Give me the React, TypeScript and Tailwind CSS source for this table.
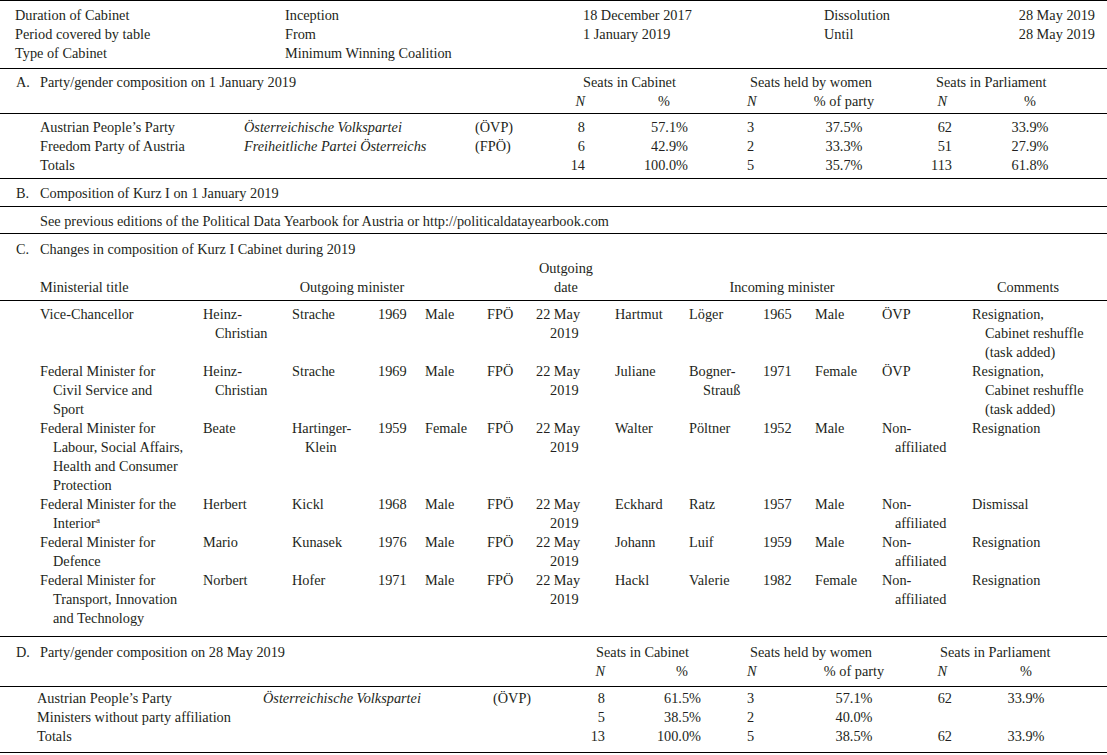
import React from "react";

type Lines = React.ReactNode[];

function Cell({ w, lines, hang = "pl-[13px]" }: { w: string; lines: Lines; hang?: string }) {
  return (
    <div className={`${w} shrink-0 whitespace-nowrap`}>
      {lines.map((l, i) => (
        <div key={i} className={`h-[19px] ${i ? hang : ""}`}>
          {l}
        </div>
      ))}
    </div>
  );
}

type CRow = {
  title: Lines;
  first: Lines;
  sur: Lines;
  year: string;
  gender: string;
  party: string;
  inFirst: Lines;
  inSur: Lines;
  inYear: string;
  inGender: string;
  inParty: Lines;
  comments: Lines;
};

const date: Lines = ["22 May", "2019"];

const cRows: CRow[] = [
  {
    title: ["Vice-Chancellor"],
    first: ["Heinz-", "Christian"],
    sur: ["Strache"],
    year: "1969",
    gender: "Male",
    party: "FPÖ",
    inFirst: ["Hartmut"],
    inSur: ["Löger"],
    inYear: "1965",
    inGender: "Male",
    inParty: ["ÖVP"],
    comments: ["Resignation,", "Cabinet reshuffle", "(task added)"],
  },
  {
    title: ["Federal Minister for", "Civil Service and", "Sport"],
    first: ["Heinz-", "Christian"],
    sur: ["Strache"],
    year: "1969",
    gender: "Male",
    party: "FPÖ",
    inFirst: ["Juliane"],
    inSur: ["Bogner-", "Strauß"],
    inYear: "1971",
    inGender: "Female",
    inParty: ["ÖVP"],
    comments: ["Resignation,", "Cabinet reshuffle", "(task added)"],
  },
  {
    title: ["Federal Minister for", "Labour, Social Affairs,", "Health and Consumer", "Protection"],
    first: ["Beate"],
    sur: ["Hartinger-", "Klein"],
    year: "1959",
    gender: "Female",
    party: "FPÖ",
    inFirst: ["Walter"],
    inSur: ["Pöltner"],
    inYear: "1952",
    inGender: "Male",
    inParty: ["Non-", "affiliated"],
    comments: ["Resignation"],
  },
  {
    title: [
      "Federal Minister for the",
      <span key="i">
        Interior<span className="relative -top-[5px] text-[9px] leading-[0]">a</span>
      </span>,
    ],
    first: ["Herbert"],
    sur: ["Kickl"],
    year: "1968",
    gender: "Male",
    party: "FPÖ",
    inFirst: ["Eckhard"],
    inSur: ["Ratz"],
    inYear: "1957",
    inGender: "Male",
    inParty: ["Non-", "affiliated"],
    comments: ["Dismissal"],
  },
  {
    title: ["Federal Minister for", "Defence"],
    first: ["Mario"],
    sur: ["Kunasek"],
    year: "1976",
    gender: "Male",
    party: "FPÖ",
    inFirst: ["Johann"],
    inSur: ["Luif"],
    inYear: "1959",
    inGender: "Male",
    inParty: ["Non-", "affiliated"],
    comments: ["Resignation"],
  },
  {
    title: ["Federal Minister for", "Transport, Innovation", "and Technology"],
    first: ["Norbert"],
    sur: ["Hofer"],
    year: "1971",
    gender: "Male",
    party: "FPÖ",
    inFirst: ["Hackl"],
    inSur: ["Valerie"],
    inYear: "1982",
    inGender: "Female",
    inParty: ["Non-", "affiliated"],
    comments: ["Resignation"],
  },
];

type PRow = { name: string; it?: string; ab?: string; n1: string; p1: string; n2: string; p2: string; n3?: string; p3?: string };

const aRows: PRow[] = [
  { name: "Austrian People’s Party", it: "Österreichische Volkspartei", ab: "(ÖVP)", n1: "8", p1: "57.1%", n2: "3", p2: "37.5%", n3: "62", p3: "33.9%" },
  { name: "Freedom Party of Austria", it: "Freiheitliche Partei Österreichs", ab: "(FPÖ)", n1: "6", p1: "42.9%", n2: "2", p2: "33.3%", n3: "51", p3: "27.9%" },
  { name: "Totals", n1: "14", p1: "100.0%", n2: "5", p2: "35.7%", n3: "113", p3: "61.8%" },
];

const dRows: PRow[] = [
  { name: "Austrian People’s Party", it: "Österreichische Volkspartei", ab: "(ÖVP)", n1: "8", p1: "61.5%", n2: "3", p2: "57.1%", n3: "62", p3: "33.9%" },
  { name: "Ministers without party affiliation", n1: "5", p1: "38.5%", n2: "2", p2: "40.0%" },
  { name: "Totals", n1: "13", p1: "100.0%", n2: "5", p2: "38.5%", n3: "62", p3: "33.9%" },
];

export default function App() {
  return (
    <div className="w-[1107px] h-[755px] bg-white font-['Liberation_Serif','Times_New_Roman',serif] text-[14.3px] leading-[19px] text-[#231f20]">
      {/* Block 0 */}
      <div className="border-t border-black pt-[5px] pb-[5px]">
        {[
          ["Duration of Cabinet", "Inception", "18 December 2017", "Dissolution", "28 May 2019"],
          ["Period covered by table", "From", "1 January 2019", "Until", "28 May 2019"],
          ["Type of Cabinet", "Minimum Winning Coalition", "", "", ""],
        ].map((r, i) => (
          <div key={i} className="flex pl-[15px] pr-[12px] h-[19px] whitespace-nowrap">
            <div className="w-[270px] shrink-0">{r[0]}</div>
            <div className="w-[298px] shrink-0">{r[1]}</div>
            <div className="w-[241px] shrink-0">{r[2]}</div>
            <div className="w-[130px] shrink-0">{r[3]}</div>
            <div className="flex-1 text-right">{r[4]}</div>
          </div>
        ))}
      </div>

      {/* A header */}
      <div className="border-t border-black pt-[4px] pb-[2px]">
        <div className="flex pl-[16px] h-[19px] whitespace-nowrap">
          <div className="w-[24px] shrink-0">A.</div>
          <div className="w-[543px] shrink-0">Party/gender composition on 1 January 2019</div>
          <div className="w-[167px] shrink-0">Seats in Cabinet</div>
          <div className="w-[186px] shrink-0">Seats held by women</div>
          <div className="flex-1">Seats in Parliament</div>
        </div>
        <div className="flex pl-[535px] h-[19px] whitespace-nowrap">
          <div className="w-[50px] shrink-0 text-right italic">N</div>
          <div className="w-[103px] shrink-0 text-right pr-[18px]">%</div>
          <div className="ml-[59px] w-[50px] shrink-0 italic">N</div>
          <div className="w-[94px] shrink-0 text-center">% of party</div>
          <div className="w-[61px] shrink-0 text-right pr-[5px] italic">N</div>
          <div className="w-[156px] shrink-0 text-center">%</div>
        </div>
      </div>

      {/* A body */}
      <div className="border-t border-black pt-[4px] pb-[3px]">
        {aRows.map((r, i) => (
          <div key={i} className="flex pl-[40px] h-[19px] whitespace-nowrap">
            <div className="w-[204px] shrink-0">{r.name}</div>
            <div className="w-[231px] shrink-0 italic">{r.it}</div>
            <div className="w-[60px] shrink-0">{r.ab}</div>
            <div className="w-[50px] shrink-0 text-right">{r.n1}</div>
            <div className="w-[103px] shrink-0 text-right">{r.p1}</div>
            <div className="ml-[59px] w-[50px] shrink-0">{r.n2}</div>
            <div className="w-[94px] shrink-0 text-center">{r.p2}</div>
            <div className="w-[61px] shrink-0 text-right">{r.n3}</div>
            <div className="w-[156px] shrink-0 text-center">{r.p3}</div>
          </div>
        ))}
      </div>

      {/* B header */}
      <div className="border-t border-black pt-[5px] pb-[3px]">
        <div className="flex pl-[16px] h-[19px] whitespace-nowrap">
          <div className="w-[24px] shrink-0">B.</div>
          <div>Composition of Kurz I on 1 January 2019</div>
        </div>
      </div>

      {/* B body */}
      <div className="border-t border-black pt-[5px] pb-[2px]">
        <div className="pl-[40px] h-[19px] whitespace-nowrap">
          See previous editions of the Political Data Yearbook for Austria or http://politicaldatayearbook.com
        </div>
      </div>

      {/* C header */}
      <div className="border-t border-black pt-[6px] pb-[3px]">
        <div className="flex pl-[16px] h-[19px] whitespace-nowrap">
          <div className="w-[24px] shrink-0">C.</div>
          <div>Changes in composition of Kurz I Cabinet during 2019</div>
        </div>
        <div className="flex pl-[501px] h-[19px] whitespace-nowrap">
          <div className="w-[130px] shrink-0 text-center">Outgoing</div>
        </div>
        <div className="flex pl-[40px] h-[19px] whitespace-nowrap">
          <div className="w-[163px] shrink-0">Ministerial title</div>
          <div className="w-[298px] shrink-0 text-center">Outgoing minister</div>
          <div className="w-[130px] shrink-0 text-center">date</div>
          <div className="w-[302px] shrink-0 text-center">Incoming minister</div>
          <div className="ml-[25px] w-[140px] shrink-0 text-center">Comments</div>
        </div>
      </div>

      {/* C body */}
      <div className="border-t border-black pt-[4px] pb-[8px]">
        {cRows.map((r, i) => (
          <div key={i} className="flex pl-[40px]">
            <Cell w="w-[163px]" lines={r.title} />
            <Cell w="w-[89px]" lines={r.first} hang="pl-[12px]" />
            <Cell w="w-[86px]" lines={r.sur} />
            <Cell w="w-[47px]" lines={[r.year]} />
            <Cell w="w-[62px]" lines={[r.gender]} />
            <Cell w="w-[49px]" lines={[r.party]} />
            <Cell w="w-[79px]" lines={date} hang="pl-[14px]" />
            <Cell w="w-[74px]" lines={r.inFirst} />
            <Cell w="w-[74px]" lines={r.inSur} hang="pl-[14px]" />
            <Cell w="w-[52px]" lines={[r.inYear]} />
            <Cell w="w-[67px]" lines={[r.inGender]} />
            <Cell w="w-[90px]" lines={r.inParty} />
            <Cell w="flex-1" lines={r.comments} />
          </div>
        ))}
      </div>

      {/* D header */}
      <div className="border-t border-black pt-[6px] pb-[5px]">
        <div className="flex pl-[16px] h-[19px] whitespace-nowrap">
          <div className="w-[24px] shrink-0">D.</div>
          <div className="w-[556px] shrink-0">Party/gender composition on 28 May 2019</div>
          <div className="w-[154px] shrink-0">Seats in Cabinet</div>
          <div className="w-[190px] shrink-0">Seats held by women</div>
          <div className="flex-1">Seats in Parliament</div>
        </div>
        <div className="flex pl-[555px] h-[19px] whitespace-nowrap">
          <div className="w-[50px] shrink-0 text-right italic">N</div>
          <div className="w-[96px] shrink-0 text-right pr-[13px]">%</div>
          <div className="ml-[46px] w-[50px] shrink-0 italic">N</div>
          <div className="w-[114px] shrink-0 text-center">% of party</div>
          <div className="w-[41px] shrink-0 text-right pr-[5px] italic">N</div>
          <div className="w-[148px] shrink-0 text-center">%</div>
        </div>
      </div>

      {/* D body */}
      <div className="border-t border-b border-black pt-[2px] pb-[6px]">
        {dRows.map((r, i) => (
          <div key={i} className="flex pl-[37px] h-[19px] whitespace-nowrap">
            <div className="w-[226px] shrink-0">{r.name}</div>
            <div className="w-[230px] shrink-0 italic">{r.it}</div>
            <div className="w-[62px] shrink-0">{r.ab}</div>
            <div className="w-[50px] shrink-0 text-right">{r.n1}</div>
            <div className="w-[96px] shrink-0 text-right">{r.p1}</div>
            <div className="ml-[46px] w-[50px] shrink-0">{r.n2}</div>
            <div className="w-[114px] shrink-0 text-center">{r.p2}</div>
            <div className="w-[41px] shrink-0 text-right">{r.n3}</div>
            <div className="w-[148px] shrink-0 text-center">{r.p3}</div>
          </div>
        ))}
      </div>
    </div>
  );
}
